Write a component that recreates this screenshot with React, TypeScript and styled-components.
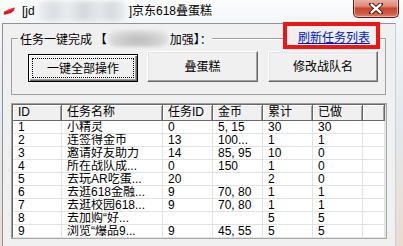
import React from 'react';
import styled, { createGlobalStyle } from 'styled-components';

const Global = createGlobalStyle`
  html, body { margin: 0; padding: 0; background: #ffffff; }
  body { width: 403px; height: 246px; overflow: hidden; }
  * { box-sizing: border-box; }
`;

const Window = styled.div`
  position: relative;
  width: 403px;
  height: 246px;
  overflow: hidden;
  display: flex;
  flex-direction: column;
  background: linear-gradient(180deg, #fcfdfd 0px, #f3f5f7 23px, #e3e9ef 120px, #eadcd0 246px);
  font-family: "Noto Sans CJK SC", "Liberation Sans", sans-serif;
  color: #000;
`;

const TitleBar = styled.div`
  height: 23px;
  flex: none;
  display: flex;
  align-items: center;
  padding: 0 0 2px 3px;
  font-family: "Liberation Sans", "Noto Sans CJK SC", sans-serif;
  font-size: 12px;
  line-height: 14px;
`;

const AppIcon = styled.svg`
  width: 12px;
  height: 8px;
  flex: none;
  margin-right: 7px;
`;

const TitleText = styled.span`
  white-space: nowrap;
`;

const TitleBlur = styled.span`
  display: inline-block;
  width: 90px;
  height: 20px;
  margin: 0 2px;
  border-radius: 6px;
  background: linear-gradient(90deg, #eef1f3 0%, #d9dee2 18%, #e9ecee 34%, #d3d8dc 52%, #e4e7ea 68%, #d6dbdf 84%, #eff1f3 100%);
  filter: blur(2px);
`;

const CloseButton = styled.div`
  margin-left: auto;
  margin-right: 4px;
  align-self: flex-start;
  margin-top: -1px;
  width: 46px;
  height: 19px;
  border: 1px solid #5a1e17;
  border-top: none;
  border-radius: 0 0 5px 5px;
  background: linear-gradient(180deg, #eab3a8 0%, #de8a7a 40%, #c8452f 52%, #cf5b45 80%, #e0836c 100%);
  box-shadow: inset 0 0 0 1px rgba(255, 220, 210, 0.55);
  display: flex;
  align-items: center;
  justify-content: center;
`;

const Body = styled.div`
  flex: 1;
  display: flex;
  min-height: 0;
`;

const FrameSide = styled.div<{ $w: number }>`
  width: ${(p) => p.$w}px;
  flex: none;
`;

const Client = styled.div`
  flex: 1;
  background: #f0f0f0;
  border-top: 1px solid #8f9398;
  border-left: 1px solid #8f9398;
  border-right: 1px solid #c9d0d8;
  padding: 5px 0 0 8px;
  display: flex;
  flex-direction: column;
  font-size: 12px;
`;

const GroupBox = styled.div`
  width: 375px;
  display: flex;
  flex-direction: column;
`;

const GroupHeader = styled.div`
  height: 18px;
  display: flex;
  align-items: flex-end;
`;

const Segment = styled.div<{ $w?: number; $side?: 'left' | 'right' }>`
  height: 9px;
  ${(p) => (p.$w ? `width: ${p.$w}px; flex: none;` : 'flex: 1;')}
  border-top: 1px solid #a0a0a0;
  box-shadow: 0 1px 0 #ffffff inset;
  ${(p) => (p.$side === 'left' ? 'border-left: 1px solid #a0a0a0;' : '')}
  ${(p) => (p.$side === 'right' ? 'border-right: 1px solid #a0a0a0;' : '')}
`;

const Caption = styled.div`
  align-self: stretch;
  display: flex;
  align-items: center;
  padding: 1px 0 0 2px;
  line-height: 16px;
  white-space: nowrap;
`;

const CaptionBlur = styled.span`
  display: inline-block;
  width: 60px;
  height: 17px;
  margin: 0 2px 0 1px;
  border-radius: 8px;
  background: radial-gradient(ellipse at 50% 60%, #bcbcbc 0%, #cfcfcf 45%, #e2e2e2 75%, #ececec 100%);
  filter: blur(1.5px);
`;

const LinkLabel = styled.a`
  align-self: stretch;
  display: flex;
  align-items: center;
  padding: 0 9px 2px 11px;
  color: #0019c8;
  text-decoration: underline;
  line-height: 14px;
  white-space: nowrap;
  cursor: pointer;
`;

const GroupBody = styled.div`
  height: 48px;
  border: 1px solid #a0a0a0;
  border-top: none;
  display: flex;
  align-items: flex-end;
  padding: 0 0 12px 16px;
`;

const Button = styled.div<{ $w: number; $h: number; $gap: number; $default?: boolean }>`
  width: ${(p) => p.$w}px;
  height: ${(p) => p.$h}px;
  margin-right: ${(p) => p.$gap}px;
  flex: none;
  display: flex;
  background: #f0f0f0;
  ${(p) =>
    p.$default
      ? `border: 1px solid #000;
         box-shadow: inset 1px 1px 0 #ffffff, inset -1px -1px 0 #696969, inset -2px -2px 0 #a0a0a0;
         padding: 3px;`
      : `border: 1px solid; border-color: #ffffff #696969 #696969 #ffffff;
         box-shadow: inset -1px -1px 0 #a0a0a0, inset 1px 1px 0 #e3e3e3;
         padding: 3px;`}
  font-size: 12px;
  line-height: 14px;
`;

const ButtonFace = styled.div<{ $focus?: boolean }>`
  flex: 1;
  display: flex;
  align-items: center;
  justify-content: center;
  border: 1px ${(p) => (p.$focus ? 'dotted #000' : 'solid transparent')};
  padding-bottom: 1px;
`;

const ListView = styled.div`
  margin-top: 8px;
  width: 376px;
  height: 136px;
  border: 1px solid;
  border-color: #a0a0a0 #a8a8a8 #a8a8a8 #a0a0a0;
  background: #ffffff;
  overflow: hidden;
  font-family: "Liberation Sans", "Noto Sans CJK SC", sans-serif;
  font-size: 12px;
`;

const ListInner = styled.div`
  border: 1px solid;
  border-color: #696969 #e3e3e3 #e3e3e3 #696969;
  height: 100%;
  overflow: hidden;
`;

const HeaderRow = styled.div`
  display: flex;
  height: 16px;
  background: #f0f0f0;
  border-bottom: 1px solid #696969;
`;

const HeaderCell = styled.div<{ $w?: number }>`
  ${(p) => (p.$w ? `width: ${p.$w}px; flex: none;` : 'flex: 1;')}
  border-right: 1px solid #696969;
  box-shadow: inset 1px 1px 0 #ffffff, inset -1px 0 0 #a0a0a0;
  padding-left: 5px;
  line-height: 15px;
  white-space: nowrap;
  overflow: hidden;
`;

const Row = styled.div`
  display: flex;
  height: 13px;
  border-bottom: 1px solid #e3e3e3;
`;

const Cell = styled.div<{ $w?: number }>`
  ${(p) => (p.$w ? `width: ${p.$w}px; flex: none;` : 'flex: 1;')}
  border-right: 1px solid #e3e3e3;
  padding-left: 5px;
  line-height: 13px;
  white-space: nowrap;
  overflow: hidden;
`;

const RedMark = styled.div`
  position: absolute;
  left: 283px;
  top: 22px;
  width: 97px;
  height: 27px;
  border: 4px solid #ee1515;
  pointer-events: none;
`;

const columns = [
  { title: 'ID', w: 49 },
  { title: '任务名称', w: 101 },
  { title: '任务ID', w: 50 },
  { title: '金币', w: 50 },
  { title: '累计', w: 50 },
  { title: '已做', w: 50 },
];

const rows: string[][] = [
  ['1', '小精灵', '0', '5, 15', '30', '30'],
  ['2', '连签得金币', '13', '100...', '1', '1'],
  ['3', '邀请好友助力', '14', '85, 95', '10', '0'],
  ['4', '所在战队成...', '0', '150', '1', '0'],
  ['5', '去玩AR吃蛋...', '20', '', '2', '0'],
  ['6', '去逛618金融...', '9', '70, 80', '1', '1'],
  ['7', '去逛校园618...', '9', '70, 80', '1', '1'],
  ['8', '去加购“好...', '', '', '5', '5'],
  ['9', '浏览“爆品9...', '9', '45, 55', '5', '5'],
];

export default function App() {
  return (
    <Window>
      <Global />
      <TitleBar>
        <AppIcon viewBox="0 0 12 8">
          <path d="M0.5 7.5 L1.2 4.6 L6.5 2.2 L11.5 0.6 L11.2 3.6 L7.5 6.2 L2.5 7.6 Z" fill="#d8161b" />
          <path d="M1.2 4.6 L6.5 2.2 L11.5 0.6 L11.4 1.6 L6.8 3.4 L1.4 5.6 Z" fill="#f04040" />
        </AppIcon>
        <TitleText>[jd</TitleText>
        <TitleBlur />
        <TitleText>]京东618叠蛋糕</TitleText>
        <CloseButton>
          <svg width="14" height="11" viewBox="0 0 14 11">
            <path d="M2 1 L12 10 M12 1 L2 10" stroke="#4a1a14" strokeWidth="4.2" strokeLinecap="round" fill="none" />
            <path d="M2.6 1.6 L11.4 9.4 M11.4 1.6 L2.6 9.4" stroke="#ffffff" strokeWidth="2.4" strokeLinecap="round" fill="none" />
          </svg>
        </CloseButton>
      </TitleBar>
      <Body>
        <FrameSide $w={2} />
        <Client>
          <GroupBox>
            <GroupHeader>
              <Segment $w={7} $side="left" />
              <Caption>
                任务一键完成 【<CaptionBlur />加强】：
              </Caption>
              <Segment />
              <LinkLabel>刷新任务列表</LinkLabel>
              <Segment $w={7} $side="right" />
            </GroupHeader>
            <GroupBody>
              <Button $w={110} $h={28} $gap={9} $default>
                <ButtonFace $focus>一键全部操作</ButtonFace>
              </Button>
              <Button $w={111} $h={31} $gap={10}>
                <ButtonFace>叠蛋糕</ButtonFace>
              </Button>
              <Button $w={110} $h={31} $gap={0}>
                <ButtonFace>修改战队名</ButtonFace>
              </Button>
            </GroupBody>
          </GroupBox>
          <ListView>
            <ListInner>
              <HeaderRow>
                {columns.map((c) => (
                  <HeaderCell key={c.title} $w={c.w}>
                    {c.title}
                  </HeaderCell>
                ))}
                <HeaderCell />
              </HeaderRow>
              {rows.map((r) => (
                <Row key={r[0]}>
                  {r.map((v, i) => (
                    <Cell key={i} $w={columns[i].w}>
                      {v}
                    </Cell>
                  ))}
                  <Cell />
                </Row>
              ))}
            </ListInner>
          </ListView>
        </Client>
        <FrameSide $w={7} />
      </Body>
      <RedMark />
    </Window>
  );
}
